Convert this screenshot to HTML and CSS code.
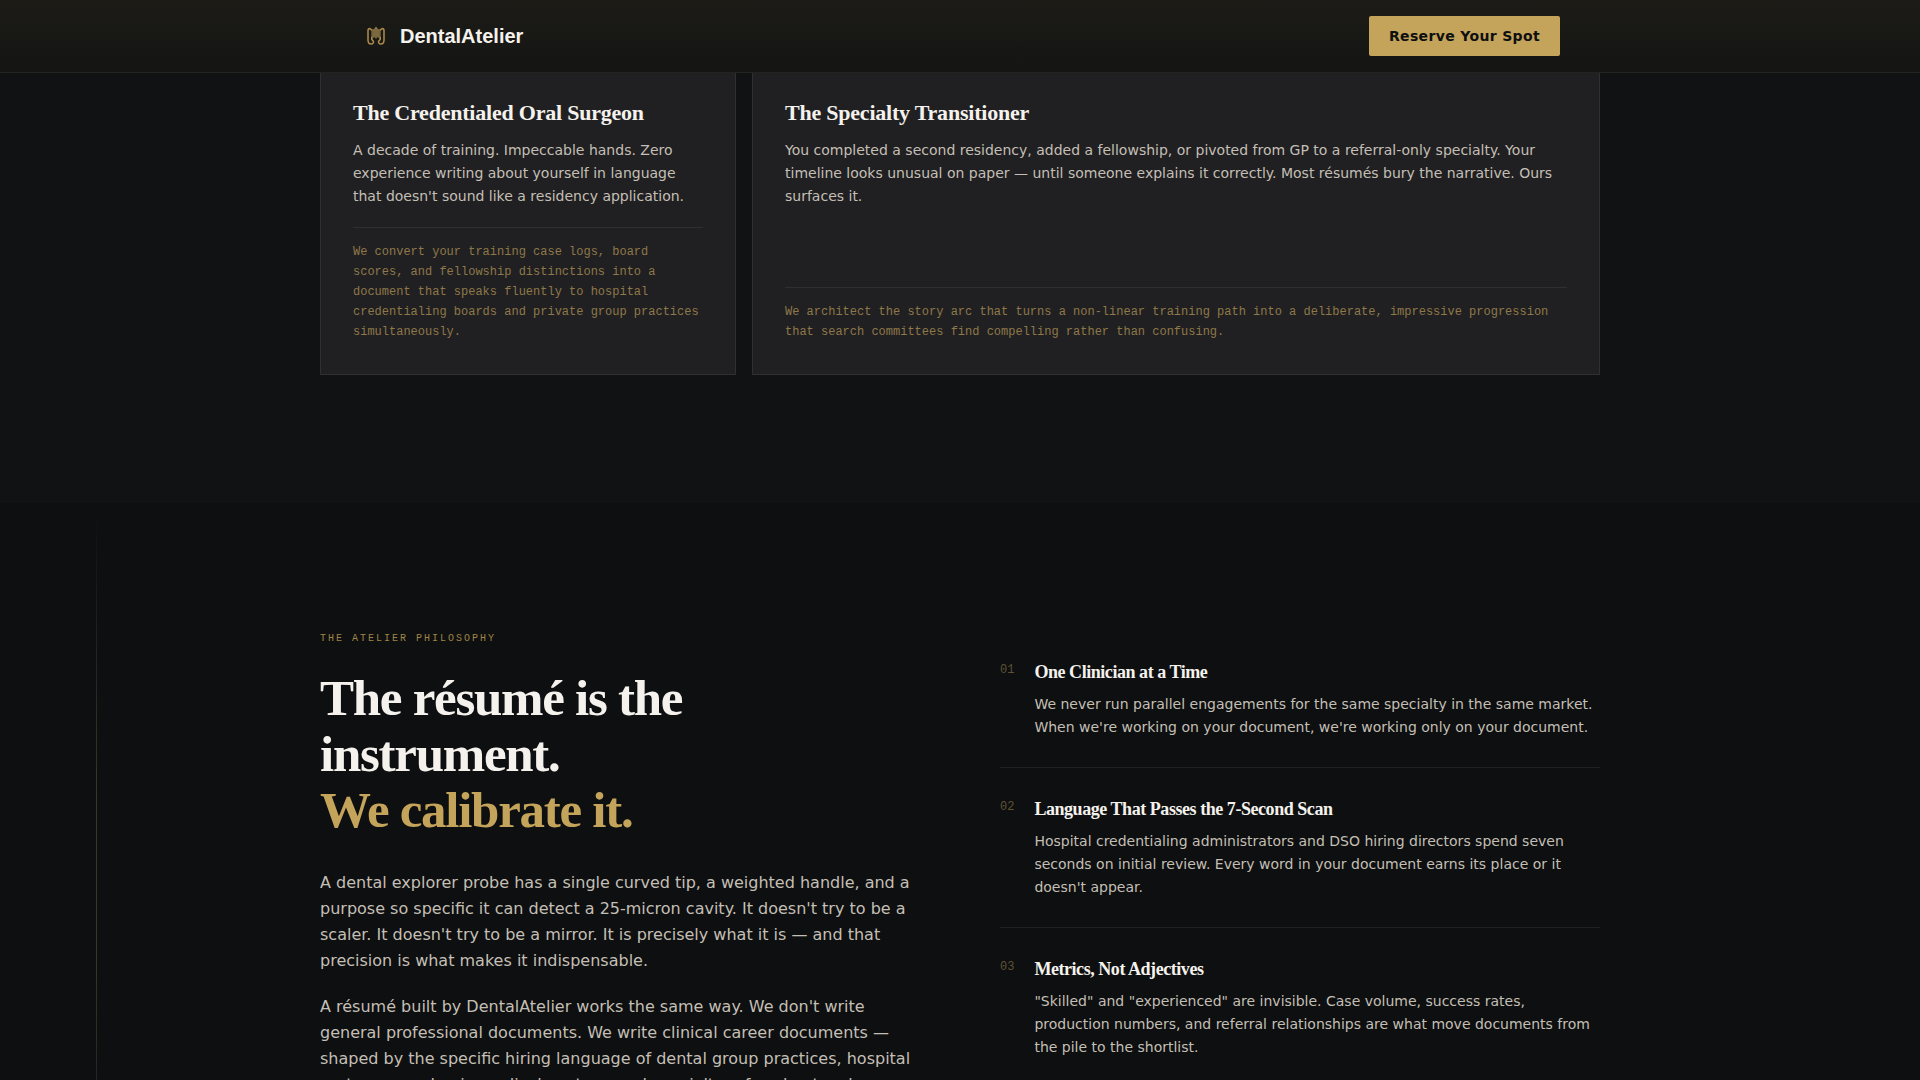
FILE: index.html
```html
<!DOCTYPE html>
<html lang="en">
<head>
    <meta charset="UTF-8">
    <meta name="viewport" content="width=device-width, initial-scale=1.0">
    <title>DentalAtelier</title>
    <link rel="stylesheet" href="styles.css">
</head>
<body>
    <header class="site-header">
        <div class="header-inner">
            <a href="#" class="logo">
                <svg class="logo-icon" viewBox="0 0 32 32" fill="none" aria-hidden="true">
                    <path class="logo-fill" d="M12.500 9 H14 L16 6.500 L18 9 H19.500 V18.500 L17.500 17 L16 19 L14.500 17 L12.500 18.500 Z"/>
                    <path d="M11.500 10 L10 8.500 C8.800 8.500 8 9.300 8 10.500 V20 C8 22.500 9.500 24 11.200 24 C12.900 24 13.800 22.600 13.400 21.200 L11.800 19.500 V17.500"/>
                    <path d="M20.500 10 L22 8.500 C23.200 8.500 24 9.300 24 10.500 V20 C24 22.500 22.500 24 20.800 24 C19.100 24 18.200 22.600 18.600 21.200 L20.200 19.500 V17.500"/>
                    <path class="logo-stem" d="M12 17.500 V10 M20 17.500 V10 M16 7.500 V9"/>
                </svg>
                <span>DentalAtelier</span>
            </a>
            <button type="button" class="reserve-button">Reserve Your Spot</button>
        </div>
    </header>

    <main>
        <section class="profiles">
            <div class="card-grid">
                <article class="card">
                    <h3>The Credentialed Oral Surgeon</h3>
                    <p>A decade of training. Impeccable hands. Zero experience writing about yourself in language that doesn't sound like a residency application.</p>
                    <p class="card-note">We convert your training case logs, board scores, and fellowship distinctions into a document that speaks fluently to hospital credentialing boards and private group practices simultaneously.</p>
                </article>
                <article class="card card-wide">
                    <h3>The Specialty Transitioner</h3>
                    <p>You completed a second residency, added a fellowship, or pivoted from GP to a referral-only specialty. Your timeline looks unusual on paper — until someone explains it correctly. Most résumés bury the narrative. Ours surfaces it.</p>
                    <p class="card-note">We architect the story arc that turns a non-linear training path into a deliberate, impressive progression that search committees find compelling rather than confusing.</p>
                </article>
            </div>
        </section>

        <section class="philosophy">
            <div class="philosophy-grid">
                <div class="philosophy-intro">
                    <p class="label">The Atelier Philosophy</p>
                    <h2>The résumé is the instrument.<br><span class="gold">We calibrate it.</span></h2>
                    <p>A dental explorer probe has a single curved tip, a weighted handle, and a purpose so specific it can detect a 25-micron cavity. It doesn't try to be a scaler. It doesn't try to be a mirror. It is precisely what it is — and that precision is what makes it indispensable.</p>
                    <p>A résumé built by DentalAtelier works the same way. We don't write general professional documents. We write clinical career documents — shaped by the specific hiring language of dental group practices, hospital systems, academic medical centers, and specialty referral networks.</p>
                </div>
                <ol class="principles">
                    <li>
                        <span class="number">01</span>
                        <div>
                            <h4>One Clinician at a Time</h4>
                            <p>We never run parallel engagements for the same specialty in the same market. When we're working on your document, we're working only on your document.</p>
                        </div>
                    </li>
                    <li>
                        <span class="number">02</span>
                        <div>
                            <h4>Language That Passes the 7-Second Scan</h4>
                            <p>Hospital credentialing administrators and DSO hiring directors spend seven seconds on initial review. Every word in your document earns its place or it doesn't appear.</p>
                        </div>
                    </li>
                    <li>
                        <span class="number">03</span>
                        <div>
                            <h4>Metrics, Not Adjectives</h4>
                            <p>"Skilled" and "experienced" are invisible. Case volume, success rates, production numbers, and referral relationships are what move documents from the pile to the shortlist.</p>
                        </div>
                    </li>
                </ol>
            </div>
        </section>
    </main>
</body>
</html>
```

FILE: styles.css
```css
* {
    box-sizing: border-box;
    margin: 0;
    padding: 0;
}

body {
    background-color: #0d0f10;
    color: #c4bfb5;
    font-family: "DejaVu Sans", sans-serif;
    font-size: 16px;
    line-height: 26px;
}

h2, h3, h4 {
    color: #f5f2ed;
    font-family: "Liberation Serif", serif;
    font-weight: bold;
}

/* Header */
.site-header {
    position: sticky;
    top: 0;
    z-index: 10;
    background: linear-gradient(#1c1b16, #141514);
    border-bottom: 1px solid #242320;
}

.header-inner {
    display: flex;
    align-items: center;
    justify-content: space-between;
    max-width: 1280px;
    margin: 0 auto;
    padding: 16px 40px;
}

.logo {
    display: flex;
    align-items: center;
    gap: 8px;
    color: #f5f2ed;
    font-family: "Liberation Sans", sans-serif;
    font-size: 20px;
    font-weight: bold;
    text-decoration: none;
}

.logo-icon {
    width: 32px;
    height: 32px;
    stroke: #b08d4e;
    stroke-width: 1.5;
    stroke-linecap: round;
    stroke-linejoin: round;
}

.logo-fill {
    fill: #7a683f;
    stroke: none;
}

.logo-stem {
    stroke: #a08548;
    stroke-width: 1;
}

.reserve-button {
    height: 40px;
    padding: 0 20px;
    background-color: #c4a35a;
    border: none;
    border-radius: 2px;
    color: #0d0f10;
    font-family: inherit;
    font-size: 14px;
    font-weight: bold;
    letter-spacing: 0.025em;
    cursor: pointer;
}

.reserve-button:hover {
    background-color: #d4b36a;
}

/* Client profile cards */
.profiles {
    background-color: #111214;
    padding-bottom: 128px;
}

.card-grid {
    display: grid;
    grid-template-columns: repeat(3, 1fr);
    gap: 16px;
    max-width: 1280px;
    margin: 0 auto;
}

.card {
    display: flex;
    flex-direction: column;
    padding: 26px 32px 32px;
    background-color: #202022;
    border: 1px solid #2f2f30;
    border-top: none;
}

.card-wide {
    grid-column: span 2;
}

.card h3 {
    margin-bottom: 12px;
    font-size: 22px;
    line-height: 28px;
    letter-spacing: -0.01em;
}

.card p {
    font-size: 14px;
    line-height: 23px;
    margin-bottom: 19px;
}

.card .card-note {
    margin-top: auto;
    margin-bottom: 0;
    padding-top: 14px;
    border-top: 1px solid #2f2f30;
    color: #8f7849;
    font-family: "Liberation Mono", monospace;
    font-size: 12px;
    line-height: 20px;
}

/* Philosophy */
.philosophy {
    position: relative;
    padding: 128px 0;
}

.philosophy::before {
    content: "";
    position: absolute;
    top: 0;
    bottom: 0;
    left: 5%;
    width: 1px;
    background: linear-gradient(transparent, #3a382e 40%, #3a382e 60%, transparent);
}

.philosophy-grid {
    display: grid;
    grid-template-columns: repeat(2, 1fr);
    gap: 80px;
    max-width: 1280px;
    margin: 0 auto;
}

.philosophy-intro .label {
    margin-bottom: 24px;
    color: #a08548;
    font-family: "Liberation Mono", monospace;
    font-size: 10px;
    line-height: 15px;
    letter-spacing: 0.2em;
    text-transform: uppercase;
}

.philosophy-intro h2 {
    margin-bottom: 32px;
    font-size: 51px;
    line-height: 56px;
    letter-spacing: -0.025em;
}

.philosophy-intro p {
    margin-bottom: 20px;
}

.gold {
    color: #c4a35a;
}

.principles {
    list-style: none;
}

.principles li {
    display: flex;
    gap: 20px;
    padding: 28px 0;
    border-bottom: 1px solid #1f2021;
}

.principles .number {
    padding-top: 2px;
    color: #5f5335;
    font-family: "Liberation Mono", monospace;
    font-size: 12px;
    line-height: 18px;
}

.principles h4 {
    margin-bottom: 8px;
    font-size: 18px;
    line-height: 26px;
    letter-spacing: -0.025em;
}

.principles p {
    font-size: 14px;
    line-height: 23px;
}
```
